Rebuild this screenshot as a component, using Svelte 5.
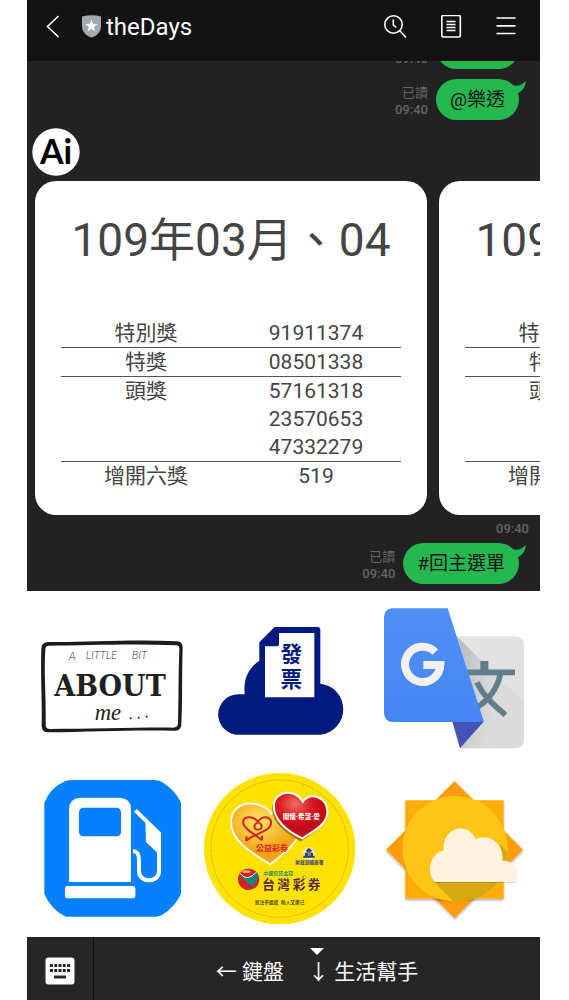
<script>
  const prizes = [
    { name: '特別獎', numbers: ['91911374'] },
    { name: '特獎', numbers: ['08501338'] },
    { name: '頭獎', numbers: ['57161318', '23570653', '47332279'] },
    { name: '增開六獎', numbers: ['519'] }
  ];
  const cards = [
    { id: 1, title: '109年03月、04' },
    { id: 2, title: '109年01月、02' }
  ];
</script>

{#snippet bubble(text)}
  <div class="bubble">
    {text}
    <svg class="tail" viewBox="0 0 18 14" aria-hidden="true">
      <path d="M0 3C7 6 14 5 17.500 0C18 6 14 10 9 13Z" fill="#25b84f" />
    </svg>
  </div>
{/snippet}

<div class="phone">
  <header>
    <button class="plain" aria-label="返回">
      <svg width="16" height="24" viewBox="0 0 16 24" fill="none" stroke="#fff" stroke-width="1.600"><path d="M12.500 1L1.500 11.500L12.500 22" /></svg>
    </button>
    <svg class="shield" width="20" height="24" viewBox="0 0 20 24" aria-hidden="true">
      <path d="M0 1.500Q9.500-1 19 1.500V10.500C19 16.500 15.500 20.500 9.500 22.500C3.500 20.500 0 16.500 0 10.500Z" fill="#a4a9b1" />
      <path d="M9.500 4.700L11.100 8.800L15.500 9.100L12.100 11.900L13.200 16.200L9.500 13.800L5.800 16.200L6.900 11.900L3.500 9.100L7.900 8.800Z" fill="#fff" />
    </svg>
    <h1>theDays</h1>
    <nav>
      <button class="plain" aria-label="搜尋">
        <svg width="24" height="24" viewBox="0 0 24 24" fill="none" stroke="#fff" stroke-width="1.600"><circle cx="9.500" cy="9.500" r="8.700" /><path d="M15.800 15.800L22 22.500M9.300 4.500V10L12.300 12.500" /></svg>
      </button>
      <button class="plain" aria-label="記事本">
        <svg width="22" height="24" viewBox="0 0 22 24" fill="none" stroke="#fff" stroke-width="1.600"><rect x="0.800" y="0.500" width="18.500" height="21.500" rx="1.500" /><path d="M5.500 6.500H14.500M5.500 9.500H14.500M5.500 12.500H14.500M5.500 15.500H14.500" /></svg>
      </button>
      <button class="plain" aria-label="選單">
        <svg width="20" height="24" viewBox="0 0 20 24" fill="none" stroke="#fff" stroke-width="1.700"><path d="M0.500 3H19.500M0.500 10.800H19.500M0.500 18.500H19.500" /></svg>
      </button>
    </nav>
  </header>

  <main>
    <div class="row clipped">
      <div class="meta"><span>09:40</span></div>
      {@render bubble('@發票')}
    </div>
    <div class="row">
      <div class="meta"><span class="read">已讀</span><span>09:40</span></div>
      {@render bubble('@樂透')}
    </div>

    <svg class="avatar" width="48" height="48" viewBox="0 0 48 48" role="img" aria-label="Ai">
      <circle cx="24" cy="24" r="23.700" fill="#fff" />
      <text x="24" y="35.500" text-anchor="middle" font-family="Lato, sans-serif" font-weight="700" font-size="34">Ai</text>
    </svg>

    <div class="carousel">
      {#each cards as card (card.id)}
        <article class="card">
          <h2>{card.title}</h2>
          <table>
            <tbody>
              {#each prizes as prize (prize.name)}
                <tr>
                  <th scope="row">{prize.name}</th>
                  <td>{#each prize.numbers as number (number)}<div>{number}</div>{/each}</td>
                </tr>
              {/each}
            </tbody>
          </table>
        </article>
      {/each}
    </div>
    <div class="meta stamp"><span>09:40</span></div>

    <div class="row last">
      <div class="meta"><span class="read">已讀</span><span>09:40</span></div>
      {@render bubble('#回主選單')}
    </div>
  </main>

  <section class="menu">
    <button class="plain" aria-label="About me">
      <svg viewBox="-9 -87 513 519">
        <path d="M54 66C160 68 300 57 440 64Q459 65 458 84C455 170 458 240 454 314Q453 332 434 332C320 329 180 335 56 337Q36 338 35 318C37 240 31 160 34 86Q35 66 54 66ZM56 77Q46 77 46 88C41 160 49 240 47 314Q47 327 60 327C180 327 320 322 430 323Q443 323 444 310C446 240 445 170 448 88Q449 76 438 76C300 70 160 77 56 77Z" fill="#1d1b1c" fill-rule="evenodd" />
        <g fill="#333" font-family="Lato, sans-serif" font-weight="300" font-style="italic" font-size="34">
          <text x="116" y="120">A</text><text x="167" y="118">LITTLE</text><text x="305" y="117">BIT</text>
        </g>
        <text x="240" y="228" text-anchor="middle" font-family="DejaVu Serif Condensed, DejaVu Serif, serif" font-weight="700" font-size="90" fill="#211f20">ABOUT</text>
        <text x="194" y="300" font-family="Liberation Serif, serif" font-style="italic" font-size="68" fill="#222">me</text>
        <g fill="#222"><circle cx="302" cy="295" r="3" /><circle cx="326" cy="293" r="3" /><circle cx="350" cy="290" r="3" /></g>
      </svg>
    </button>
    <button class="plain" aria-label="雲端發票">
      <svg viewBox="-21 -57 513 519">
        <path d="M100 374A60 60 0 0 1 100 253H119C115 205 130 174 163 152V97L209 51H338Q346 51 346 60V221A77 77 0 0 1 347 374Z" fill="#001a80" />
        <path d="M222 69H328V262H180V109H214Q222 109 222 101Z" fill="#fff" />
        <g fill="#001a80" text-anchor="middle" font-family="Noto Sans CJK TC, sans-serif" font-weight="700" font-size="65">
          <text x="259" y="155">發</text><text x="259" y="231">票</text>
        </g>
      </svg>
    </button>
    <button class="plain" aria-label="Google 翻譯">
      <svg viewBox="-3 -12 513 519">
        <defs>
          <linearGradient id="grey" x1="0" y1="0" x2="1" y2="1"><stop offset="0" stop-color="#e4e4e4" /><stop offset="1" stop-color="#dedede" /></linearGradient>
          <linearGradient id="shade" x1="0" y1="0" x2="1" y2="0.300"><stop offset="0" stop-color="#9296a8" stop-opacity="0.600" /><stop offset="0.700" stop-color="#d0d0d0" stop-opacity="0.300" /></linearGradient>
          <linearGradient id="blue" x1="0" y1="0" x2="0" y2="1"><stop offset="0" stop-color="#508ff5" /><stop offset="1" stop-color="#4486f4" /></linearGradient>
        </defs>
        <path d="M258 124H438Q462 126 462 150V435Q460 459 436 460H270Z" fill="url(#grey)" />
        <path d="M262 126L462 322V435Q460 459 436 460H270L341 381Z" fill="url(#shade)" />
        <path d="M290 232H435M391 238C380 286 352 318 318 339M321 262C340 304 370 328 406 360" fill="none" stroke="#607d89" stroke-width="17" />
        <path d="M343 198V228" stroke="#607d89" stroke-width="24" />
        <path d="M247 380H341L270 460Z" fill="#4453b6" />
        <path d="M66 40H233L342 381H70Q43 380 42 353V66Q43 42 66 40Z" fill="url(#blue)" />
        <path d="M196 171A53 53 0 1 0 211 210H160" fill="none" stroke="#f1f1f1" stroke-width="24" />
      </svg>
    </button>
    <button class="plain" aria-label="加油站">
      <svg viewBox="-9 -18 513 519">
        <path d="M125 30H373Q388 30 400 38Q436 62 453 98V372Q434 412 397 434Q386 440 376 440H108Q64 420 43 372V98Q62 52 105 34Q115 30 125 30Z" fill="#0580ff" />
        <path d="M149 83H270Q303 86 303 117V336H117V117Q118 86 149 83Z" fill="#fff" />
        <rect x="147" y="113" width="126" height="86" rx="13" fill="#0580ff" />
        <rect x="105" y="348" width="211" height="37" rx="7" fill="#fff" />
        <path d="M316 121L387 190V304C387 340 327 340 327 304V270C327 252 322 244 309 243" fill="none" stroke="#fff" stroke-width="12" />
        <path d="M346 150L392 192V258L348 216Z" fill="#fff" />
      </svg>
    </button>
    <button class="plain" aria-label="台灣彩券">
      <svg viewBox="-6 -3 513 519">
        <defs>
          <radialGradient id="gold" cx="0.400" cy="0.300"><stop offset="0" stop-color="#ffe66b" /><stop offset="1" stop-color="#f2a312" /></radialGradient>
          <radialGradient id="red" cx="0.400" cy="0.250"><stop offset="0" stop-color="#ed6f67" /><stop offset="0.600" stop-color="#dc1b22" /><stop offset="1" stop-color="#c40c18" /></radialGradient>
        </defs>
        <circle cx="239" cy="251" r="227" fill="#ffe100" />
        <circle cx="239" cy="251" r="206" fill="none" stroke="#a99a18" stroke-width="2" stroke-dasharray="5 3" />
        <path d="M211 298C160 266 93 230 93 172C93 106 178 98 214 146C258 101 316 139 305 190C294 236 248 267 211 298Z" fill="url(#gold)" stroke="#fffbe0" stroke-width="6" />
        <path d="M307 222C268 200 218 167 222 119C226 76 288 70 308 112C333 81 379 99 382 137C385 177 341 200 307 222Z" fill="#9b7100" transform="translate(-5 7)" />
        <path d="M307 220C264 200 218 165 222 118C226 76 288 70 308 110C333 79 379 97 382 137C385 177 341 198 307 220Z" fill="url(#red)" stroke="#fff" stroke-width="6" />
        <path d="M131 178C122 150 160 152 174 170C190 146 224 158 210 184C198 204 156 208 138 228M131 178C138 198 166 206 186 226M174 172C162 176 158 192 172 194C188 194 190 178 174 172M138 228L140 214M186 226L186 212" fill="none" stroke="#d32423" stroke-width="6" />
        <g font-family="Roboto, Noto Sans CJK TC, sans-serif" font-weight="700">
          <text x="304" y="163" text-anchor="middle" font-size="20" fill="#fff">關懷·希望·愛</text>
          <text x="216" y="257" text-anchor="middle" font-size="24" fill="#db231d">公益彩券</text>
          <text x="328" y="297" text-anchor="middle" font-size="14" fill="#334572">財政部國庫署</text>
          <text x="235" y="330" text-anchor="middle" font-size="15" fill="#19915e">中國信託金控</text>
          <g font-size="38" fill="#542640"><text x="187" y="371">台</text><text x="232" y="371">灣</text><text x="278" y="371">彩</text><text x="323" y="371">券</text></g>
          <text x="165" y="417" font-size="14" fill="#4c4220">投注不過度</text><text x="243" y="417" font-size="14" fill="#4c4220">助人又樂己</text>
        </g>
        <circle cx="327" cy="266" r="20" fill="#eee4a3" />
        <path d="M327 249L337 257H334V264H339V272H344V278H310V272H315V264H320V257H317Z" fill="#27406f" />
        <path d="M325 260V273M330 260V273" stroke="#eee4a3" stroke-width="2" />
        <circle cx="146" cy="343" r="32" fill="#d61f27" />
        <path d="M121 325C136 346 154 340 170 322L177 335C168 352 160 356 164 370C150 356 126 350 121 325Z" fill="#168579" />
        <path d="M121 325C136 346 154 338 170 320" fill="none" stroke="#fff" stroke-width="3" />
        <ellipse cx="139" cy="320" rx="13" ry="4" fill="#f59a94" />
        <circle cx="313" cy="337" r="6" fill="#72a337" /><circle cx="314" cy="337" r="3" fill="#fff" />
      </svg>
    </button>
    <button class="plain" aria-label="天氣">
      <svg viewBox="-3 -18 513 519">
        <defs>
          <filter id="drop" x="-20%" y="-20%" width="140%" height="140%"><feDropShadow dx="0" dy="5" stdDeviation="3" flood-color="#000" flood-opacity="0.300" /></filter>
          <filter id="soft" x="-20%" y="-20%" width="140%" height="140%"><feDropShadow dx="0" dy="3" stdDeviation="2" flood-color="#000" flood-opacity="0.150" /></filter>
        </defs>
        <path d="M254 33L459 239L254 444L48 239Z" fill="#ff9c08" filter="url(#drop)" />
        <path d="M106 91H401V386H106Z" fill="#ffad0a" filter="url(#drop)" />
        <circle cx="255" cy="236" r="158" fill="#ffc515" />
        <path d="M190 334L250 394Q336 398 382 336Z" fill="#d7a80f" />
        <path d="M390 222L413 247Q412 263 408 272H396Z" fill="#d7a80f" />
        <path d="M194 336C166 306 182 248 221 241C215 168 298 154 317 208C354 189 401 216 398 272C430 270 447 297 442 326Q441 336 433 336Z" fill="#fff3e0" filter="url(#soft)" />
      </svg>
    </button>
  </section>

  <footer>
    <button class="plain keyboard" aria-label="鍵盤">
      <svg width="30" height="28" viewBox="0 0 30 28">
        <rect x="0.500" y="0.500" width="29" height="27" rx="3" fill="#fff" />
        <path d="M5 8.500H25M5 13.500H25" stroke="#262626" stroke-width="3" stroke-dasharray="3 1.250" />
        <path d="M9 20H21" stroke="#262626" stroke-width="3" />
      </svg>
    </button>
    <button class="plain toggle">
      <svg class="caret" width="14" height="7" viewBox="0 0 14 7" aria-hidden="true"><path d="M0 0H14L7 7Z" fill="#fff" /></svg>
      <span>← 鍵盤</span><span>↓ 生活幫手</span>
    </button>
  </footer>
</div>

<style>
  :global(body) {
    background: #fff;
  }
  .phone {
    margin: 0 29px 0 27px;
    font-family: Roboto, 'Noto Sans CJK TC', sans-serif;
    background: #222;
  }
  .plain {
    display: block;
    margin: 0;
    padding: 0;
    border: 0;
    background: none;
    color: inherit;
    font: inherit;
    cursor: pointer;
  }
  svg {
    display: block;
  }
  header {
    display: flex;
    align-items: center;
    padding: 11px 24px 18px 19px;
    background: #131313;
    color: #fff;
  }
  .shield {
    margin-left: 20px;
  }
  h1 {
    margin: 0 0 0 4px;
    font-size: 24px;
    font-weight: 400;
    line-height: 32px;
  }
  nav {
    display: flex;
    gap: 33px;
    margin-left: auto;
  }
  main {
    overflow: hidden;
  }
  .row {
    display: flex;
    justify-content: flex-end;
    align-items: flex-end;
    gap: 8px;
    margin: 10px 21px 0 0;
  }
  .clipped {
    height: 8px;
    margin-top: 0;
    overflow: hidden;
  }
  .clipped .tail {
    display: none;
  }
  .meta {
    display: flex;
    flex-direction: column;
    align-items: flex-end;
    padding-bottom: 2px;
    color: #666;
    font-size: 13px;
    font-weight: 500;
    line-height: 17px;
  }
  .read {
    font-weight: 400;
  }
  .bubble {
    position: relative;
    padding: 0 14px;
    border-radius: 21px;
    background: #25b84f;
    color: #0b120d;
    font-size: 19px;
    line-height: 41px;
  }
  .tail {
    position: absolute;
    top: 2px;
    right: -7px;
    width: 18px;
    height: 14px;
  }
  .avatar {
    margin: 8px 0 5px 5px;
  }
  .carousel {
    display: flex;
    gap: 12px;
    padding-left: 8px;
    overflow: hidden;
  }
  .card {
    box-sizing: border-box;
    flex: 0 0 392px;
    padding: 32px 26px 25px;
    border-radius: 21px;
    background: #fff;
    color: #444;
  }
  h2 {
    margin: 0 0 52px;
    font-size: 46px;
    font-weight: 400;
    line-height: 54px;
    text-align: center;
    white-space: nowrap;
  }
  table {
    width: 100%;
    border-collapse: collapse;
    table-layout: fixed;
    font-size: 21px;
    line-height: 28px;
    text-align: center;
  }
  th,
  td {
    padding: 0;
    font-weight: 400;
    vertical-align: top;
  }
  tr + tr {
    border-top: 1px solid #555;
  }
  .stamp {
    margin: 5px 11px 0 0;
  }
  .last {
    margin-top: 4px;
    margin-bottom: 7px;
  }
  .menu {
    display: grid;
    grid-template-columns: repeat(3, 1fr);
    background: #fff;
  }
  .menu svg {
    width: 100%;
    height: auto;
  }
  footer {
    display: flex;
    background: #262626;
    color: #fff;
    font-size: 21px;
  }
  .keyboard {
    display: flex;
    align-items: center;
    justify-content: center;
    flex: 0 0 67px;
    padding-top: 4px;
    border-right: 1px solid #111;
  }
  .toggle {
    position: relative;
    display: flex;
    flex: 1;
    justify-content: center;
    gap: 24px;
    padding-top: 8px;
    line-height: 55px;
  }
  .caret {
    position: absolute;
    top: 11px;
    left: calc(50% - 7px);
  }
</style>
